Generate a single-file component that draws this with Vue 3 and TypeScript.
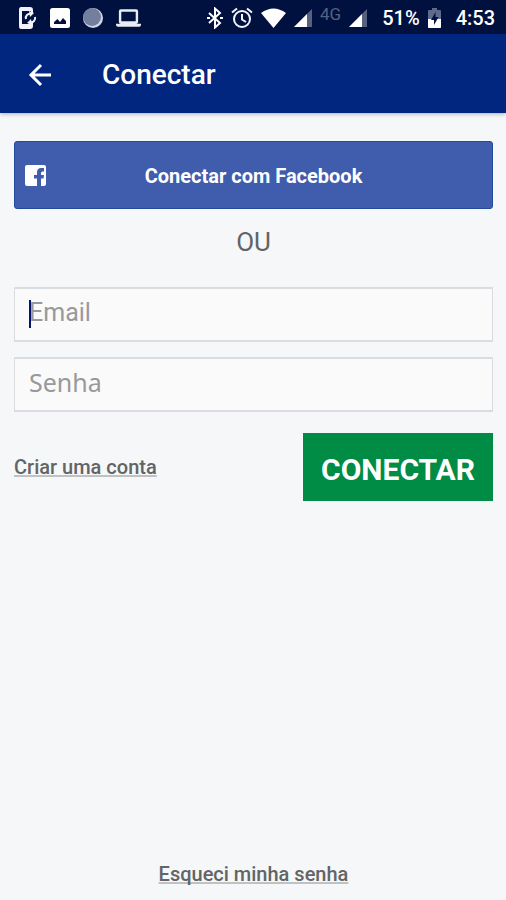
<script setup lang="ts">
import { ref } from 'vue'

const email = ref('')
const password = ref('')
const emailTouched = ref(false)
</script>

<template>
  <div class="screen">
    <div class="status">
      <div class="group notifications">
        <svg width="20" height="24" viewBox="0 0 20 24" fill="none" stroke="#f1f3f8">
          <path fill="#f1f3f8" stroke="none" fill-rule="evenodd" d="M4 1h9q3 0 3 3v3h-2V5H5v13h9v-1h2v3q0 3-3 3H4q-2 0-2-3V4q0-3 2-3z" />
          <path d="M9 13a4 4 0 0 1 5-5M18 11a4 4 0 0 1-5 5" stroke-width="2" />
          <path d="M12 5l5 2-4 4zM15 19l-5-2 4-4z" fill="#f1f3f8" stroke="none" />
        </svg>
        <svg width="20" height="20" viewBox="0 0 20 20">
          <path fill="#fff" fill-rule="evenodd" d="M2.500 0h15Q20 0 20 2.500v15q0 2.500-2.500 2.500h-15Q0 20 0 17.500v-15Q0 0 2.500 0zM4 16h12v-3l-3-3-3 4-2.500-3L4 14z" />
        </svg>
        <svg width="20" height="20" viewBox="0 0 20 20">
          <circle cx="10" cy="10" r="10" fill="#cfd6e6" />
          <circle cx="9" cy="9" r="9" fill="#747f9e" />
        </svg>
        <svg width="25" height="20" viewBox="0 0 26 20">
          <path fill="#e9ecf3" fill-rule="evenodd" d="M5 1h16q2 0 2 2v11q0 2-2 2h5v1q0 2-2 2H2q-2 0-2-2v-1h5q-2 0-2-2V3q0-2 2-2zM5.500 3.500v10h15v-10z" />
        </svg>
      </div>
      <div class="group system">
        <svg width="16" height="22" viewBox="0 0 16 22" fill="none" stroke="#fff" stroke-width="2">
          <path d="M2 6l11 10-5 4.500v-19L13 6 2 16" />
          <path d="M0 11h3M13 11h3" />
        </svg>
        <svg width="22" height="22" viewBox="0 0 22 22" fill="none" stroke="#f4f5f9" stroke-width="2">
          <circle cx="11" cy="12" r="8" />
          <path d="M11 7v5.500l4 2.500M1 5.500L6 1.500M21 5.500L16 1.500" />
        </svg>
        <svg width="25" height="20" viewBox="0 0 25 20">
          <path fill="#fff" d="M0 5Q12.500-4 25 5L12.500 20z" />
        </svg>
        <svg width="18" height="18" viewBox="0 0 18 18">
          <path fill="#56617f" d="M18 0v18H0z" />
          <path fill="#fff" d="M13 5v13H0z" />
        </svg>
        <span class="network">4G</span>
        <svg width="18" height="18" viewBox="0 0 18 18">
          <path fill="#56617f" d="M18 0v18H0z" />
          <path fill="#fff" d="M13 5v13H0z" />
        </svg>
        <span class="percent">51%</span>
        <svg width="13" height="20" viewBox="0 0 13 20">
          <path fill="#606b8b" d="M4 0h5v2h3q1 0 1 1v16q0 1-1 1H1q-1 0-1-1V3q0-1 1-1h3z" />
          <path fill="#fff" d="M0 11h13v8q0 1-1 1H1q-1 0-1-1z" />
          <path fill="#001140" d="M7.500 4L3 12h3v5l4.500-8h-3z" />
        </svg>
        <time class="clock">4:53</time>
      </div>
    </div>

    <header class="bar">
      <button class="back" type="button" aria-label="Voltar">
        <svg width="24" height="24" viewBox="0 0 24 24" fill="none" stroke="#fff" stroke-width="3">
          <path d="M23 12H3M13 2L3 12l10 10" />
        </svg>
      </button>
      <h1>Conectar</h1>
    </header>

    <main class="content">
      <button class="facebook" type="button">
        <svg class="logo" width="21" height="21" viewBox="0 0 21 21">
          <path fill="#fff" d="M2 0h17q2 0 2 2v17q0 2-2 2h-3v-7.500h2.500l.5-3.500h-3V8q0-1.500 1.500-1.500H19V3h-3Q12 3 12 7.500V10H9v3.500h3V21H2q-2 0-2-2V2Q0 0 2 0z" />
        </svg>
        Conectar com Facebook
      </button>
      <p class="or">OU</p>
      <form class="form" @submit.prevent>
        <div class="field">
          <input v-model="email" class="email" type="email" placeholder="Email" aria-label="Email" @focus="emailTouched = true" />
          <span v-if="!emailTouched" class="caret"></span>
        </div>
        <div class="field">
          <input v-model="password" class="password" type="password" placeholder="Senha" aria-label="Senha" />
        </div>
        <div class="actions">
          <a href="#criar">Criar uma conta</a>
          <button class="submit" type="submit">CONECTAR</button>
        </div>
      </form>
      <a class="forgot" href="#senha">Esqueci minha senha</a>
    </main>
  </div>
</template>

<style>
body {
  margin: 0;
  background: #f5f7f9;
}
</style>

<style scoped>
.screen {
  display: flex;
  flex-direction: column;
  min-height: 100vh;
  background: #f5f7f9;
  color: #626466;
  font-family: Roboto, "Liberation Sans", sans-serif;
}
.screen * {
  box-sizing: border-box;
}
svg {
  display: block;
  flex: none;
}
button {
  padding: 0;
  border: 0;
  color: #fff;
  font-family: inherit;
  cursor: pointer;
}
.status {
  display: flex;
  justify-content: space-between;
  height: 34px;
  padding: 0 11px 0 17px;
  background: #001140;
  color: #fff;
}
.group {
  display: flex;
  align-items: center;
  padding-top: 2px;
}
.notifications {
  gap: 13px;
}
.system {
  gap: 8px;
}
.network {
  align-self: flex-start;
  margin-top: 2px;
  color: #56617f;
  font-size: 17px;
  line-height: 20px;
}
.percent,
.clock {
  font-size: 20px;
  font-weight: 500;
  line-height: 24px;
}
.percent {
  margin-left: 7px;
}
.clock {
  margin-left: 7px;
}
.bar {
  display: flex;
  align-items: center;
  gap: 50px;
  height: 79px;
  padding: 2px 28px 0;
  background: #00267f;
  box-shadow: 0 1px 4px rgba(0, 0, 0, 0.3);
}
.back {
  background: none;
}
h1 {
  margin: 0;
  color: #fff;
  font-size: 28px;
  font-weight: 500;
  line-height: 32px;
}
.content {
  display: flex;
  flex: 1;
  flex-direction: column;
  padding: 28px 13px 14px 14px;
}
.facebook {
  position: relative;
  height: 68px;
  padding-top: 2px;
  border: 1px solid #244a9c;
  border-radius: 3px;
  background: #405cad;
  font-size: 20px;
  font-weight: 700;
}
.logo {
  position: absolute;
  top: 23px;
  left: 10px;
}
.or {
  margin: 17px 0 29px;
  font-size: 26px;
  line-height: 32px;
  text-align: center;
}
.form {
  display: grid;
  gap: 15px;
}
.field {
  position: relative;
}
input {
  display: block;
  width: 100%;
  height: 55px;
  padding: 0 14px 5px;
  border: solid #dadce0;
  border-width: 2px 1px;
  border-radius: 0;
  outline: none;
  background: #fafafa;
  color: #333;
  font-family: inherit;
  font-size: 25px;
}
.password {
  font-family: "Noto Sans", sans-serif;
}
input::placeholder {
  color: #98999b;
  opacity: 1;
}
.caret {
  position: absolute;
  top: 13px;
  left: 15px;
  width: 2px;
  height: 28px;
  background: #00156b;
}
.actions {
  display: flex;
  align-items: center;
  justify-content: space-between;
  padding-top: 6px;
}
.submit {
  height: 68px;
  padding: 4px 18px 0;
  background: #008c45;
  font-size: 30px;
  font-weight: 700;
}
a {
  color: #626466;
  font-size: 20px;
  font-weight: 500;
  line-height: 24px;
  text-decoration: underline;
  text-decoration-color: #bfc1c3;
  text-decoration-thickness: 2px;
  text-underline-offset: 1px;
  text-decoration-skip-ink: none;
}
.forgot {
  align-self: center;
  margin-top: auto;
}
</style>
